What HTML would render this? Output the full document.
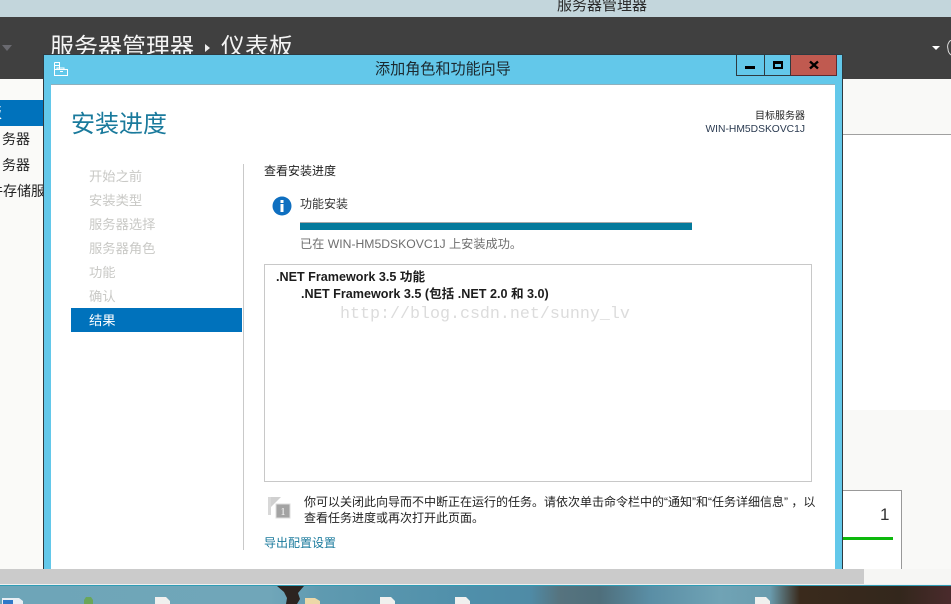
<!DOCTYPE html>
<html lang="zh"><head><meta charset="utf-8">
<style>
html,body{margin:0;padding:0}
body{width:951px;height:604px;overflow:hidden;position:relative;background:#fafaf8;font-family:"Liberation Sans","Noto Sans CJK SC",sans-serif;color:#222}
div,span,a{position:absolute;white-space:nowrap}
svg{position:absolute;display:block}
.t{font-size:12px;line-height:16px}
.nav{left:89px;font-size:13.300px;line-height:18px;color:#c9c9c6}
.side{font-size:14px;line-height:18px;color:#222}
</style></head><body>
<div style="left:0;top:0;width:951px;height:17px;background:#c3d6dc"></div>
<div style="left:557px;top:-3px;font-size:15px;line-height:18px;color:#2a2a2a">服务器管理器</div>
<div style="left:0;top:17px;width:951px;height:62px;background:#404040"></div>
<div style="left:50px;top:34px;font-size:24px;line-height:28px;color:#f4f4f4">服务器管理器</div>
<svg style="left:0;top:40px" width="951" height="20"><path d="M2 5h10l-5 6z" fill="#6a6a70"/><path d="M205 4v8l5-4z" fill="#eee"/><path d="M932 6h8l-4 4z" fill="#fff"/><path d="M951 0a8 8 0 0 0-3 9a8 8 0 0 0 3 6" fill="none" stroke="#ddd"/></svg>
<div style="left:221px;top:34px;font-size:24px;line-height:28px;color:#f4f4f4">仪表板</div>

<div style="left:0;top:100px;width:43px;height:26px;background:#0072bc"></div>
<div class="side" style="left:-12px;top:104px;color:#fff">板</div>
<div class="side" style="left:2px;top:130px">务器</div>
<div class="side" style="left:2px;top:156px">务器</div>
<div class="side" style="left:-11px;top:182px">件存储服</div>

<div style="left:843px;top:79px;width:108px;height:55px;background:#f9f9f7"></div>
<div style="left:843px;top:134px;width:108px;height:1px;background:#a0a0a0"></div>
<div style="left:843px;top:135px;width:108px;height:275px;background:#fff"></div>
<div style="left:843px;top:410px;width:108px;height:159px;background:#f9f9f7"></div>
<div style="left:843px;top:490px;width:59px;height:79px;background:#fff;border:solid #999;border-width:1px 1px 0 0;box-sizing:border-box"></div>
<div style="left:843px;top:537px;width:50px;height:3px;background:#0cb80c"></div>
<div style="left:880px;top:505px;font-size:17px;line-height:20px;color:#333">1</div>

<div style="left:43px;top:54px;width:800px;height:515px;background:#63c8ea;border:solid #2e3a40;border-width:1px 1px 0 1px;box-sizing:border-box"></div>
<svg style="left:52px;top:60px" width="18" height="18" viewBox="0 0 18 18" fill="none" stroke="#fff"><path d="M2.500 2.500h5v7M2.500 2.500v13h13v-6h-13M2 5.500h6M5 9.500v-1.500h7v1.500M8 11.500h3"/></svg>
<div style="left:375px;top:61px;font-size:15.100px;line-height:18px;color:#1c2a30">添加角色和功能向导</div>
<div style="left:736px;top:55px;width:29px;height:21px;background:#63c8ea;border:solid #2e3a40;border-width:0 1px 1px 1px;box-sizing:border-box"></div>
<div style="left:745px;top:66px;width:10px;height:3px;background:#000"></div>
<div style="left:764px;top:55px;width:27px;height:21px;border:solid #2e3a40;border-width:0 1px 1px 0;box-sizing:border-box"></div>
<div style="left:773px;top:61px;width:10px;height:8px;border:2px solid #000;border-top-width:3px;box-sizing:border-box"></div>
<div style="left:791px;top:55px;width:46px;height:21px;background:#c05a50;border:solid #5e2a30;border-width:0 1px 1px 0;box-sizing:border-box"></div>
<svg style="left:808px;top:60px" width="13" height="10"><path d="M2 1.500l8 7M10 1.500l-8 7" stroke="#000" stroke-width="2.400"/></svg>

<div style="left:51px;top:84px;width:784px;height:1px;background:#8fb0bd"></div>
<div style="left:51px;top:85px;width:784px;height:484px;background:#fff"></div>

<div style="left:71px;top:109px;font-size:24px;line-height:32px;color:#1a7a9c">安装进度</div>
<div style="right:146px;top:110px;font-size:10px;line-height:14px;color:#222">目标服务器</div>
<div style="right:146px;top:122px;font-size:10.300px;line-height:15px;color:#2a3a50">WIN-HM5DSKOVC1J</div>

<div style="left:243px;top:164px;width:1px;height:386px;background:#c9c9c9"></div>
<div class="nav" style="top:168px">开始之前</div>
<div class="nav" style="top:192px">安装类型</div>
<div class="nav" style="top:216px">服务器选择</div>
<div class="nav" style="top:240px">服务器角色</div>
<div class="nav" style="top:264px">功能</div>
<div class="nav" style="top:288px">确认</div>
<div style="left:71px;top:308px;width:171px;height:24px;background:#0072bc"></div>
<div class="nav" style="top:312px;color:#fff">结果</div>

<div class="t" style="left:264px;top:163px;color:#222">查看安装进度</div>
<svg style="left:272px;top:196px" width="20" height="20"><circle cx="10" cy="10" r="9.500" fill="#0f6fc0"/><rect x="8.500" y="8" width="3" height="8" fill="#fff"/><rect x="8.500" y="4" width="3" height="3" fill="#fff"/></svg>
<div class="t" style="left:300px;top:196px;color:#333">功能安装</div>
<div style="left:300px;top:222px;width:392px;height:8px;background:#047a9c;border-top:1px solid #a9a9a9;box-sizing:border-box"></div>
<div style="left:300px;top:236px;color:#6e6e6e;font-size:12.200px;line-height:16px">已在 WIN-HM5DSKOVC1J 上安装成功。</div>

<div style="left:264px;top:264px;width:548px;height:218px;border:1px solid #c8c8c8;box-sizing:border-box;background:#fff"></div>
<div style="left:276px;top:269px;font-size:12.600px;line-height:16px;font-weight:bold;color:#1c1c1c">.NET Framework 3.5 功能</div>
<div style="left:301px;top:286px;font-size:12.600px;line-height:16px;font-weight:bold;color:#1c1c1c">.NET Framework 3.5 (包括 .NET 2.0 和 3.0)</div>
<div style="left:340px;top:305px;font-family:'Liberation Mono',monospace;font-size:16.670px;line-height:20px;color:#dcdcdc">http://blog.csdn.net/sunny_lv</div>

<svg style="left:268px;top:496px" width="24" height="28"><rect x="0" y="1" width="3" height="18" fill="#d8d8d8"/><path d="M3 1h10l-10 10z" fill="#d0d0d0"/><rect x="8" y="8" width="14" height="14" fill="#a3a3a3" stroke="#ddd"/><text x="15" y="19" text-anchor="middle" font-size="10" font-family="Liberation Serif" fill="#fff">1</text></svg>
<div style="left:304px;top:494px;color:#222;font-size:12px;line-height:16px">你可以关闭此向导而不中断正在运行的任务。请依次单击命令栏中的“通知”和“任务详细信息” ，以</div>
<div class="t" style="left:304px;top:510px;color:#222">查看任务进度或再次打开此页面。</div>
<div class="t" style="left:264px;top:535px;color:#1a7a9c">导出配置设置</div>

<div style="left:0;top:569px;width:864px;height:15px;background:#cbcbcb"></div>
<div style="left:864px;top:569px;width:87px;height:15px;background:#f6f6f4"></div>
<div style="left:0;top:584px;width:951px;height:1px;background:#f0f0f0"></div>
<div style="left:0;top:585px;width:951px;height:1px;background:#2f9db5"></div>
<div style="left:0;top:586px;width:951px;height:18px;background:linear-gradient(90deg,#6ea5b8 0,#70a6b9 270px,#5f9ab0 320px,#4f8faa 470px,#4f8ba6 530px,#56737e 560px,#4f6f7c 600px,#5a8ea5 650px,#70a3b5 720px,#6a9cae 770px,#3a2a1c 800px,#33271c 900px,#4a2a2c 951px)"></div>
<svg style="left:0;top:586px" width="951" height="18">
<path d="M277 0h27l-6 7l2 6l-3 5h-11l1-6l-3-6z" fill="#2c2420"/>
<path d="M2 12h17l4 3v3H2z" fill="#e8eef4"/><rect x="3" y="14" width="10" height="4" fill="#2f78c8"/>
<path d="M84 14l2-3h5l2 3v4h-9z" fill="#6aa65a"/>
<path d="M155 11h11l4 4v3h-15zM380 11h11l4 4v3h-15zM455 11h11l4 4v3h-15zM755 11h11l4 4v3h-15z" fill="#f0f0ee"/>
<path d="M305 12h10l5 3v3h-15z" fill="#ecd8a8"/>
</svg>
</body></html>
